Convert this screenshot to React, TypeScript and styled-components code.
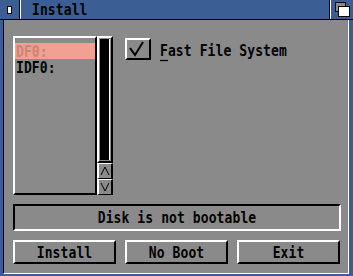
import styled, { createGlobalStyle } from "styled-components";

const GlobalStyle = createGlobalStyle`
  html, body {
    margin: 0;
    padding: 0;
    background: #8a8a8a;
  }
  body {
    font-family: "DejaVu Sans Mono", "Liberation Mono", monospace;
  }
`;

const Window = styled.div`
  width: 353px;
  height: 276px;
  box-sizing: border-box;
  background: #3b5f95;
  display: flex;
  flex-direction: column;
`;

const TitleBar = styled.div`
  height: 19px;
  border-bottom: 1px solid #000;
  display: flex;
  align-items: stretch;
`;

const CloseGadget = styled.div`
  width: 19px;
  border-right: 1px solid #000;
  box-shadow: 1px 0 0 #fff;
  display: flex;
  align-items: center;
  justify-content: center;
`;

const CloseIcon = styled.div`
  width: 3px;
  height: 6px;
  background: #fff;
  border: 1px solid #000;
`;

const TitleText = styled.div`
  flex: 1;
  padding-left: 12px;
  display: flex;
  align-items: center;
`;

const DepthGadget = styled.div`
  width: 22px;
  border-left: 1px solid #fff;
  box-shadow: -1px 0 0 #000;
  display: flex;
  align-items: center;
  justify-content: center;
`;

const Body = styled.div`
  flex: 1;
  margin: 0 4px 2px 3px;
  border-left: 1px solid #000;
  border-right: 1px solid #fff;
  border-bottom: 1px solid #fff;
  background: #8a8a8a;
  padding: 16px 7px 0 9px;
  display: flex;
  flex-direction: column;
`;

const Glyphs = styled.span<{ $color?: string }>`
  display: inline-block;
  font-size: 13px;
  font-weight: bold;
  line-height: 11px;
  letter-spacing: 0.1px;
  color: ${(p) => p.$color ?? "#000"};
  transform: scaleY(1.25);
  white-space: pre;
`;

const Hotkey = styled.span`
  text-decoration: underline;
  text-decoration-thickness: 1px;
  text-underline-offset: 3px;
`;

const TopRow = styled.div`
  display: flex;
  align-items: flex-start;
  height: 159px;
`;

const ListView = styled.div`
  width: 84px;
  height: 159px;
  box-sizing: border-box;
  border: 2px solid;
  border-color: #fff #000 #000 #fff;
  padding-top: 5px;
  display: flex;
  flex-direction: column;
`;

const ListItem = styled.div<{ $selected?: boolean }>`
  height: 16px;
  padding-left: 1px;
  display: flex;
  align-items: center;
  background: ${(p) => (p.$selected ? "#f1a091" : "transparent")};
`;

const Scroller = styled.div`
  width: 16px;
  height: 159px;
  display: flex;
  flex-direction: column;
`;

const PropBox = styled.div`
  flex: 1;
  box-sizing: border-box;
  border: 2px solid;
  border-color: #fff #000 #000 #fff;
  padding: 1px;
  display: flex;
`;

const Knob = styled.div`
  flex: 1;
  background: #000;
  border-right: 1px solid #fff;
`;

const ArrowButton = styled.div`
  height: 16px;
  box-sizing: border-box;
  border: 1px solid;
  border-width: 1px 2px 1px 2px;
  border-color: #fff #000 #000 #fff;
  display: flex;
  align-items: center;
  justify-content: center;
`;

const CheckRow = styled.div`
  display: flex;
  align-items: center;
  margin: 2px 0 0 12px;
`;

const CheckBox = styled.div`
  width: 26px;
  height: 22px;
  box-sizing: border-box;
  border: 2px solid;
  border-color: #fff #000 #000 #fff;
  display: flex;
  align-items: center;
  justify-content: center;
`;

const CheckLabel = styled.div`
  margin-left: 9px;
`;

const StatusBox = styled.div`
  margin-top: 9px;
  height: 27px;
  box-sizing: border-box;
  border: 2px solid;
  border-color: #000 #fff #fff #000;
  display: flex;
  align-items: center;
  justify-content: center;
`;

const ButtonRow = styled.div`
  margin-top: 9px;
  display: flex;
  gap: 9px;
`;

const Button = styled.div`
  width: 103px;
  height: 24px;
  box-sizing: border-box;
  border: 2px solid;
  border-color: #fff #000 #000 #fff;
  display: flex;
  align-items: center;
  justify-content: center;
`;

function DepthIcon() {
  return (
    <svg width="15" height="15" viewBox="0 0 15 15">
      <rect x="0.5" y="0.5" width="10" height="9" fill="#8a8a8a" stroke="#000" />
      <rect x="3.5" y="4.5" width="11" height="10" fill="#fff" stroke="#000" />
    </svg>
  );
}

function Arrow({ up }: { up?: boolean }) {
  return (
    <svg width="10" height="10" viewBox="0 0 10 10">
      <polyline
        points={up ? "1,9 5,1 9,9" : "1,1 5,9 9,1"}
        fill="none"
        stroke="#000"
        strokeWidth="1"
      />
    </svg>
  );
}

function CheckMark() {
  return (
    <svg width="18" height="16" viewBox="0 0 18 16">
      <polyline points="1,7 6,14 14,1" fill="none" stroke="#000" strokeWidth="2" />
    </svg>
  );
}

export default function App() {
  const disks = ["DF0:", "IDF0:"];
  const selected = 0;

  return (
    <>
      <GlobalStyle />
      <Window>
        <TitleBar>
          <CloseGadget>
            <CloseIcon />
          </CloseGadget>
          <TitleText>
            <Glyphs>Install</Glyphs>
          </TitleText>
          <DepthGadget>
            <DepthIcon />
          </DepthGadget>
        </TitleBar>
        <Body>
          <TopRow>
            <ListView>
              {disks.map((d, i) => (
                <ListItem key={d} $selected={i === selected}>
                  <Glyphs $color={i === selected ? "#c98576" : "#000"}>{d}</Glyphs>
                </ListItem>
              ))}
            </ListView>
            <Scroller>
              <PropBox>
                <Knob />
              </PropBox>
              <ArrowButton>
                <Arrow up />
              </ArrowButton>
              <ArrowButton>
                <Arrow />
              </ArrowButton>
            </Scroller>
            <CheckRow>
              <CheckBox>
                <CheckMark />
              </CheckBox>
              <CheckLabel>
                <Glyphs>
                  <Hotkey>F</Hotkey>ast File System
                </Glyphs>
              </CheckLabel>
            </CheckRow>
          </TopRow>
          <StatusBox>
            <Glyphs>Disk is not bootable</Glyphs>
          </StatusBox>
          <ButtonRow>
            <Button>
              <Glyphs>Install</Glyphs>
            </Button>
            <Button>
              <Glyphs>No Boot</Glyphs>
            </Button>
            <Button>
              <Glyphs>Exit</Glyphs>
            </Button>
          </ButtonRow>
        </Body>
      </Window>
    </>
  );
}
